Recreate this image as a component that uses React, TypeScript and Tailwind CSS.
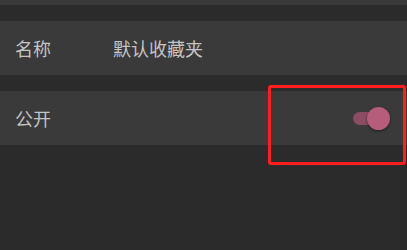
import React from "react";

export default function App() {
  return (
    <div
      className="w-[407px] h-[250px] bg-[#2b2b2b] flex flex-col relative overflow-hidden"
      style={{ fontFamily: '"Noto Sans CJK SC", "Noto Sans", sans-serif' }}
    >
      <div className="h-[5px] bg-[#3a3a3a]" />
      <div className="h-[16px]" />
      <div className="h-[54px] bg-[#3a3a3a] flex items-center px-[15px] text-[18px] text-[#c4c4c4]">
        <span className="w-[98px]">名称</span>
        <span>默认收藏夹</span>
      </div>
      <div className="h-[16px]" />
      <div className="h-[54px] bg-[#3a3a3a] flex items-center justify-between pl-[15px] pr-[17px] text-[18px] text-[#c4c4c4]">
        <span>公开</span>
        <div className="relative w-[37px] h-[23px] flex items-center">
          <div className="absolute left-0 w-[26px] h-[13px] rounded-full bg-[#8a4d63]" />
          <div className="absolute right-0 w-[23px] h-[23px] rounded-full bg-[#b55d7b] shadow-[0_1px_3px_rgba(0,0,0,0.5)]" />
        </div>
      </div>
      <div className="absolute left-[268px] top-[85px] w-[138px] h-[80px] border-[3px] border-[#ff1d1d] rounded-[3px]" />
    </div>
  );
}
